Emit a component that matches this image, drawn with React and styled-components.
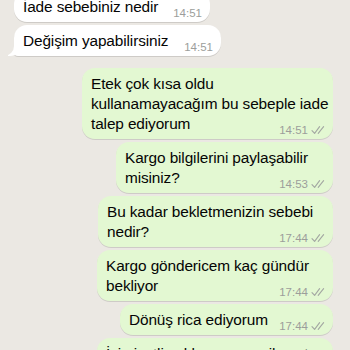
import styled, { createGlobalStyle } from 'styled-components';

const GlobalStyle = createGlobalStyle`
  html, body {
    margin: 0;
    padding: 0;
    background: #ebe8e3;
  }
  body {
    width: 350px;
    height: 350px;
    overflow: hidden;
    font-family: 'Liberation Sans', Arial, sans-serif;
  }
`;

const messages = [
  { id: 1, out: false, width: 196, lines: ['İade sebebiniz nedir'], time: '14:51' },
  { id: 2, out: false, width: 207, tail: true, lines: ['Değişim yapabilirsiniz'], time: '14:51' },
  {
    id: 3,
    out: true,
    width: 251,
    newGroup: true,
    lines: ['Etek çok kısa oldu', 'kullanamayacağım bu sebeple iade', 'talep ediyorum'],
    time: '14:51',
  },
  { id: 4, out: true, width: 217, lines: ['Kargo bilgilerini paylaşabilir', 'misiniz?'], time: '14:53' },
  { id: 5, out: true, width: 235, lines: ['Bu kadar bekletmenizin sebebi', 'nedir?'], time: '17:44' },
  { id: 6, out: true, width: 236, lines: ['Kargo göndericem kaç gündür', 'bekliyor'], time: '17:44' },
  { id: 7, out: true, width: 213, lines: ['Dönüş rica ediyorum'], time: '17:44' },
  { id: 8, out: true, width: 236, lines: ['İyi niyetli yaklaşıyorum şikayet', 'etmek istemiyorum'], time: '17:45' },
];

const Checks = () => (
  <svg width="14" height="10" viewBox="0 0 14 10" fill="none">
    <path d="M1 5.6 L3.6 8.4 L8.6 1.6" stroke="#a3a7a2" strokeWidth="1.1" strokeLinecap="round" strokeLinejoin="round" />
    <path d="M7.2 8.4 L12.6 1.6" stroke="#a3a7a2" strokeWidth="1.1" strokeLinecap="round" />
  </svg>
);

const App = () => {
  return (
    <>
      <GlobalStyle />
      <Chat>
        {messages.map((m) => (
          <Bubble key={m.id} $out={m.out} $width={m.width} $newGroup={m.newGroup} $tail={m.tail}>
            {m.lines.slice(0, -1).map((line) => (
              <Line key={line}>{line}</Line>
            ))}
            <LastLine>
              <span>{m.lines[m.lines.length - 1]}</span>
              <Meta>
                <Time>{m.time}</Time>
                {m.out && <Checks />}
              </Meta>
            </LastLine>
          </Bubble>
        ))}
      </Chat>
    </>
  );
};

export default App;

const Chat = styled.div`
  display: flex;
  flex-direction: column;
  margin-top: -9px;
`;

const Bubble = styled.div`
  position: relative;
  box-sizing: border-box;
  width: ${(p) => p.$width}px;
  align-self: ${(p) => (p.$out ? 'flex-end' : 'flex-start')};
  margin: ${(p) => (p.$newGroup ? '12px' : '3px')} ${(p) => (p.$out ? '17px' : '0')} 0
    ${(p) => (p.$out ? '0' : '14px')};
  padding: 6px 8px 5px 9px;
  background: ${(p) => (p.$out ? '#e3f8d2' : '#ffffff')};
  border-radius: 13px;
  box-shadow: 0 1px 0.5px rgba(0, 0, 0, 0.12);
  color: #050505;
  font-size: 15.4px;
  letter-spacing: -0.12px;
  line-height: 20px;

  &:first-child {
    margin-top: 0;
  }

  ${(p) =>
    p.$tail &&
    `
    border-bottom-left-radius: 4px;
    &::before {
      content: '';
      position: absolute;
      left: -6px;
      bottom: 0;
      width: 14px;
      height: 14px;
      background: #ffffff;
      border-bottom-right-radius: 12px 14px;
    }
    &::after {
      content: '';
      position: absolute;
      left: -10px;
      bottom: 0;
      width: 10px;
      height: 16px;
      background: #ebe8e3;
      border-bottom-right-radius: 10px;
    }
  `}
`;

const Line = styled.div`
  white-space: nowrap;
`;

const LastLine = styled.div`
  display: flex;
  align-items: flex-end;
  white-space: nowrap;
`;

const Meta = styled.span`
  display: flex;
  align-items: center;
  gap: 3px;
  margin-left: auto;
  padding-left: 8px;
  margin-bottom: -3px;
  line-height: 14px;
`;

const Time = styled.span`
  font-size: 11.5px;
  letter-spacing: 0;
  color: #9c9e9b;
`;
